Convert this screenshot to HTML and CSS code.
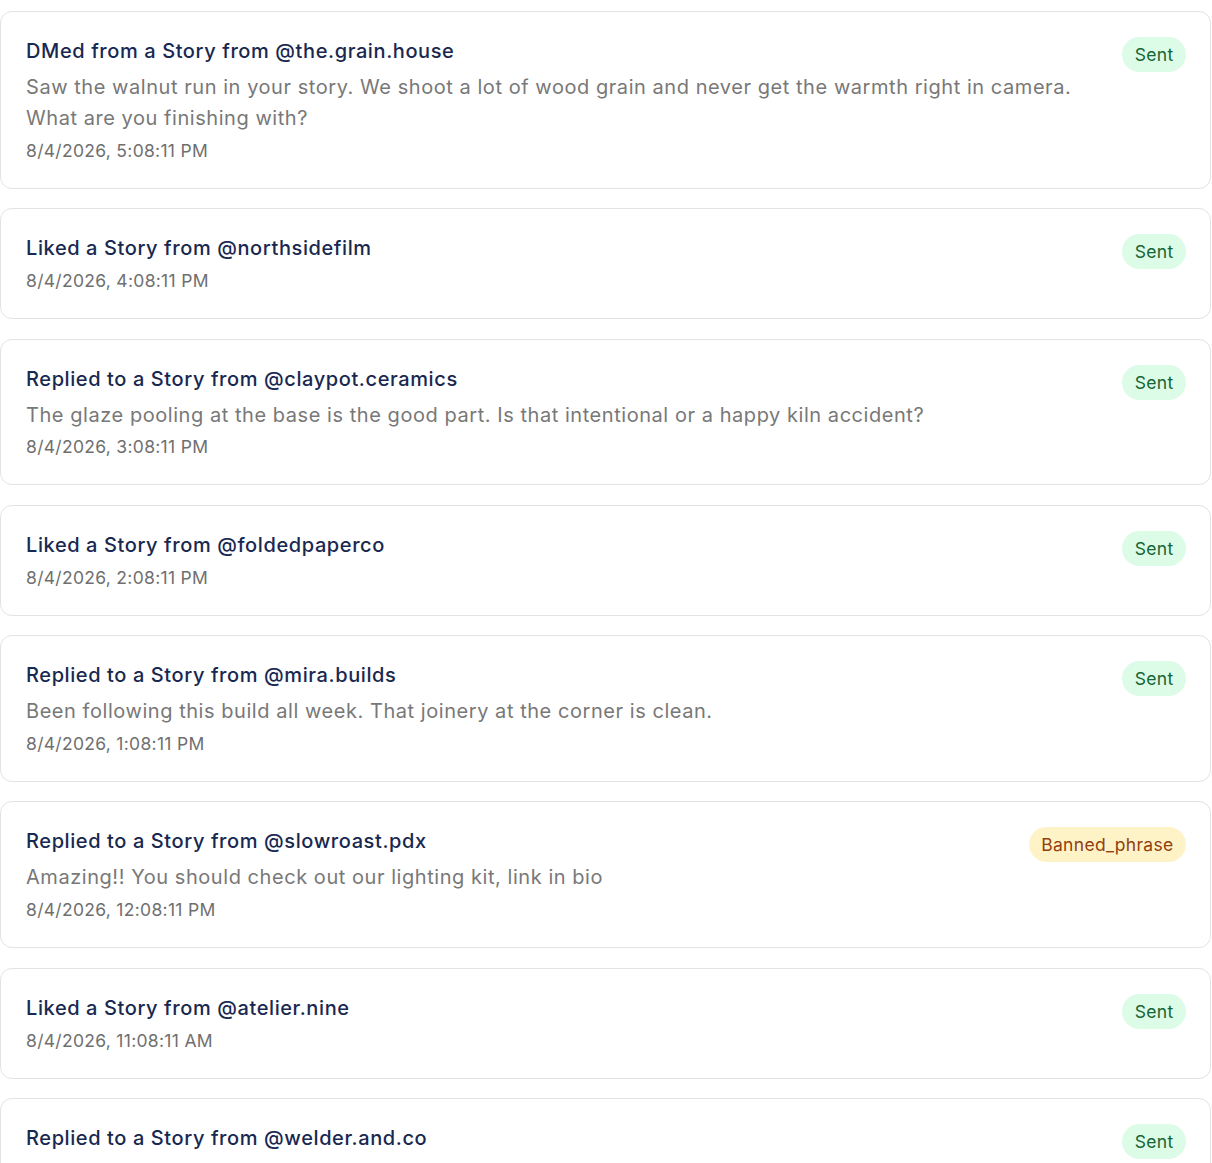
FILE: index.html
```html
<!DOCTYPE html>
<html lang="en">
<head>
<meta charset="utf-8">
<title>Activity</title>
<link rel="stylesheet" href="styles.css">
</head>
<body>
<div class="list">
  <div class="card">
    <div class="main">
      <div class="title">DMed from a Story from @the.grain.house</div>
      <div class="msg">Saw the walnut run in your story. We shoot a lot of wood grain and never get the warmth right in camera. What are you finishing with?</div>
      <div class="date">8/4/2026, 5:08:11 PM</div>
    </div>
    <span class="badge sent">Sent</span>
  </div>
  <div class="card">
    <div class="main">
      <div class="title">Liked a Story from @northsidefilm</div>
      <div class="date">8/4/2026, 4:08:11 PM</div>
    </div>
    <span class="badge sent">Sent</span>
  </div>
  <div class="card">
    <div class="main">
      <div class="title">Replied to a Story from @claypot.ceramics</div>
      <div class="msg">The glaze pooling at the base is the good part. Is that intentional or a happy kiln accident?</div>
      <div class="date">8/4/2026, 3:08:11 PM</div>
    </div>
    <span class="badge sent">Sent</span>
  </div>
  <div class="card">
    <div class="main">
      <div class="title">Liked a Story from @foldedpaperco</div>
      <div class="date">8/4/2026, 2:08:11 PM</div>
    </div>
    <span class="badge sent">Sent</span>
  </div>
  <div class="card">
    <div class="main">
      <div class="title">Replied to a Story from @mira.builds</div>
      <div class="msg">Been following this build all week. That joinery at the corner is clean.</div>
      <div class="date">8/4/2026, 1:08:11 PM</div>
    </div>
    <span class="badge sent">Sent</span>
  </div>
  <div class="card">
    <div class="main">
      <div class="title">Replied to a Story from @slowroast.pdx</div>
      <div class="msg">Amazing!! You should check out our lighting kit, link in bio</div>
      <div class="date">8/4/2026, 12:08:11 PM</div>
    </div>
    <span class="badge banned">Banned_phrase</span>
  </div>
  <div class="card">
    <div class="main">
      <div class="title">Liked a Story from @atelier.nine</div>
      <div class="date">8/4/2026, 11:08:11 AM</div>
    </div>
    <span class="badge sent">Sent</span>
  </div>
  <div class="card">
    <div class="main">
      <div class="title">Replied to a Story from @welder.and.co</div>
      <div class="msg">Clean beads. What wire are you running on that one?</div>
      <div class="date">8/4/2026, 10:08:11 AM</div>
    </div>
    <span class="badge sent">Sent</span>
  </div>
</div>
</body>
</html>
```

FILE: styles.css
```css
html, body {
  margin: 0;
  padding: 0;
  background: #ffffff;
}

body {
  font-family: Inter, "Liberation Sans", sans-serif;
  -webkit-font-smoothing: antialiased;
}

.list {
  display: flex;
  flex-direction: column;
  gap: 19.6px;
  padding: 11px 1px 40px 0;
}

.card {
  display: flex;
  align-items: flex-start;
  gap: 16px;
  border: 1px solid #e3e3e3;
  border-radius: 12px;
  padding: 25px 24px 25px 25px;
  background: #ffffff;
}

.main {
  flex: 1;
  min-width: 0;
}

.title {
  font-size: 20px;
  line-height: 28px;
  font-weight: 500;
  letter-spacing: 0.6px;
  color: #182850;
}

.msg {
  margin-top: 7px;
  font-size: 20px;
  line-height: 31px;
  letter-spacing: 0.55px;
  color: #787878;
}

.date {
  margin-top: 6px;
  font-size: 17.5px;
  line-height: 25px;
  letter-spacing: 0.3px;
  color: #6f6f6f;
}

.msg + .date {
  margin-top: 3.5px;
}

.badge {
  flex-shrink: 0;
  font-size: 17.5px;
  line-height: 25px;
  letter-spacing: 0.3px;
  padding: 5px 12.5px;
  border-radius: 999px;
  white-space: nowrap;
}

.badge.sent {
  background: #dcfce7;
  color: #166534;
}

.badge.banned {
  background: #fef3c7;
  color: #92400e;
}
```
